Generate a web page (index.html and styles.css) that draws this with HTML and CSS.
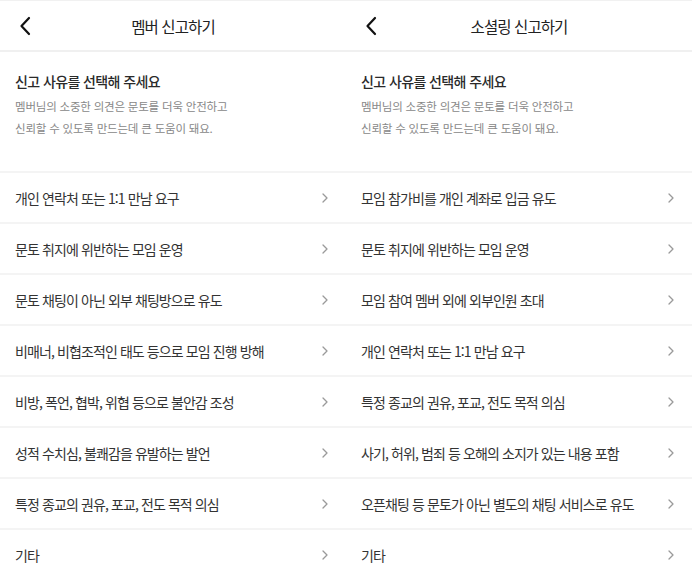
FILE: index.html
```html
<!DOCTYPE html>
<html lang="ko">
<head>
<meta charset="utf-8">
<title>신고하기</title>
<link rel="stylesheet" href="styles.css">
</head>
<body>
<div class="screens">
  <section class="panel">
    <header class="topbar">
      <span class="back"><svg width="12" height="20" viewBox="0 0 12 20"><path d="M10 2 L2.5 10 L10 18" fill="none" stroke="#111" stroke-width="2.2" stroke-linecap="round" stroke-linejoin="round"/></svg></span>
      <h1 class="title">멤버 신고하기</h1>
    </header>
    <div class="intro">
      <h2 class="intro-title">신고 사유를 선택해 주세요</h2>
      <p class="intro-text">멤버님의 소중한 의견은 문토를 더욱 안전하고<br>신뢰할 수 있도록 만드는데 큰 도움이 돼요.</p>
    </div>
    <ul class="reasons">
      <li class="reason"><span>개인 연락처 또는 1:1 만남 요구</span><svg class="chev" width="6" height="10" viewBox="0 0 6 10"><path d="M1 1 L5 5 L1 9" fill="none" stroke="#9a9a9a" stroke-width="1.3" stroke-linecap="round" stroke-linejoin="round"/></svg></li>
      <li class="reason"><span>문토 취지에 위반하는 모임 운영</span><svg class="chev" width="6" height="10" viewBox="0 0 6 10"><path d="M1 1 L5 5 L1 9" fill="none" stroke="#9a9a9a" stroke-width="1.3" stroke-linecap="round" stroke-linejoin="round"/></svg></li>
      <li class="reason"><span>문토 채팅이 아닌 외부 채팅방으로 유도</span><svg class="chev" width="6" height="10" viewBox="0 0 6 10"><path d="M1 1 L5 5 L1 9" fill="none" stroke="#9a9a9a" stroke-width="1.3" stroke-linecap="round" stroke-linejoin="round"/></svg></li>
      <li class="reason"><span>비매너, 비협조적인 태도 등으로 모임 진행 방해</span><svg class="chev" width="6" height="10" viewBox="0 0 6 10"><path d="M1 1 L5 5 L1 9" fill="none" stroke="#9a9a9a" stroke-width="1.3" stroke-linecap="round" stroke-linejoin="round"/></svg></li>
      <li class="reason"><span>비방, 폭언, 협박, 위협 등으로 불안감 조성</span><svg class="chev" width="6" height="10" viewBox="0 0 6 10"><path d="M1 1 L5 5 L1 9" fill="none" stroke="#9a9a9a" stroke-width="1.3" stroke-linecap="round" stroke-linejoin="round"/></svg></li>
      <li class="reason"><span>성적 수치심, 불쾌감을 유발하는 발언</span><svg class="chev" width="6" height="10" viewBox="0 0 6 10"><path d="M1 1 L5 5 L1 9" fill="none" stroke="#9a9a9a" stroke-width="1.3" stroke-linecap="round" stroke-linejoin="round"/></svg></li>
      <li class="reason"><span>특정 종교의 권유, 포교, 전도 목적 의심</span><svg class="chev" width="6" height="10" viewBox="0 0 6 10"><path d="M1 1 L5 5 L1 9" fill="none" stroke="#9a9a9a" stroke-width="1.3" stroke-linecap="round" stroke-linejoin="round"/></svg></li>
      <li class="reason"><span>기타</span><svg class="chev" width="6" height="10" viewBox="0 0 6 10"><path d="M1 1 L5 5 L1 9" fill="none" stroke="#9a9a9a" stroke-width="1.3" stroke-linecap="round" stroke-linejoin="round"/></svg></li>
    </ul>
  </section>
  <section class="panel">
    <header class="topbar">
      <span class="back"><svg width="12" height="20" viewBox="0 0 12 20"><path d="M10 2 L2.5 10 L10 18" fill="none" stroke="#111" stroke-width="2.2" stroke-linecap="round" stroke-linejoin="round"/></svg></span>
      <h1 class="title">소셜링 신고하기</h1>
    </header>
    <div class="intro">
      <h2 class="intro-title">신고 사유를 선택해 주세요</h2>
      <p class="intro-text">멤버님의 소중한 의견은 문토를 더욱 안전하고<br>신뢰할 수 있도록 만드는데 큰 도움이 돼요.</p>
    </div>
    <ul class="reasons">
      <li class="reason"><span>모임 참가비를 개인 계좌로 입금 유도</span><svg class="chev" width="6" height="10" viewBox="0 0 6 10"><path d="M1 1 L5 5 L1 9" fill="none" stroke="#9a9a9a" stroke-width="1.3" stroke-linecap="round" stroke-linejoin="round"/></svg></li>
      <li class="reason"><span>문토 취지에 위반하는 모임 운영</span><svg class="chev" width="6" height="10" viewBox="0 0 6 10"><path d="M1 1 L5 5 L1 9" fill="none" stroke="#9a9a9a" stroke-width="1.3" stroke-linecap="round" stroke-linejoin="round"/></svg></li>
      <li class="reason"><span>모임 참여 멤버 외에 외부인원 초대</span><svg class="chev" width="6" height="10" viewBox="0 0 6 10"><path d="M1 1 L5 5 L1 9" fill="none" stroke="#9a9a9a" stroke-width="1.3" stroke-linecap="round" stroke-linejoin="round"/></svg></li>
      <li class="reason"><span>개인 연락처 또는 1:1 만남 요구</span><svg class="chev" width="6" height="10" viewBox="0 0 6 10"><path d="M1 1 L5 5 L1 9" fill="none" stroke="#9a9a9a" stroke-width="1.3" stroke-linecap="round" stroke-linejoin="round"/></svg></li>
      <li class="reason"><span>특정 종교의 권유, 포교, 전도 목적 의심</span><svg class="chev" width="6" height="10" viewBox="0 0 6 10"><path d="M1 1 L5 5 L1 9" fill="none" stroke="#9a9a9a" stroke-width="1.3" stroke-linecap="round" stroke-linejoin="round"/></svg></li>
      <li class="reason"><span>사기, 허위, 범죄 등 오해의 소지가 있는 내용 포함</span><svg class="chev" width="6" height="10" viewBox="0 0 6 10"><path d="M1 1 L5 5 L1 9" fill="none" stroke="#9a9a9a" stroke-width="1.3" stroke-linecap="round" stroke-linejoin="round"/></svg></li>
      <li class="reason"><span>오픈채팅 등 문토가 아닌 별도의 채팅 서비스로 유도</span><svg class="chev" width="6" height="10" viewBox="0 0 6 10"><path d="M1 1 L5 5 L1 9" fill="none" stroke="#9a9a9a" stroke-width="1.3" stroke-linecap="round" stroke-linejoin="round"/></svg></li>
      <li class="reason"><span>기타</span><svg class="chev" width="6" height="10" viewBox="0 0 6 10"><path d="M1 1 L5 5 L1 9" fill="none" stroke="#9a9a9a" stroke-width="1.3" stroke-linecap="round" stroke-linejoin="round"/></svg></li>
    </ul>
  </section>
</div>
</body>
</html>
```

FILE: styles.css
```css
* { box-sizing: border-box; }
html, body { margin: 0; padding: 0; background: #fff; }
body {
  font-family: "Noto Sans CJK KR", "Noto Sans", sans-serif;
  color: #333;
  overflow: hidden;
}
.screens {
  display: flex;
  width: 692px;
  height: 582px;
}
.panel {
  width: 346px;
  flex: 0 0 346px;
  display: flex;
  flex-direction: column;
}
.topbar {
  position: relative;
  height: 52px;
  border-top: 1px solid #f1f1f1;
  border-bottom: 2px solid #f0f0f0;
  display: flex;
  align-items: center;
  justify-content: center;
}
.back {
  position: absolute;
  left: 19px;
  top: 15px;
  display: flex;
}
.title {
  margin: 0;
  font-size: 15.5px;
  font-weight: 400;
  color: #222;
  letter-spacing: -0.9px;
  line-height: 20px;
}
.intro {
  padding: 19px 15px 32px;
}
.intro-title {
  margin: 0;
  font-size: 14px;
  font-weight: 500;
  color: #2a2a2a;
  line-height: 20px;
  letter-spacing: -0.6px;
}
.intro-text {
  margin: 4px 0 0;
  font-size: 11.5px;
  line-height: 22px;
  color: #888;
  letter-spacing: -0.2px;
}
.reasons {
  list-style: none;
  margin: 0;
  padding: 0;
}
.reason {
  height: 51px;
  border-top: 2px solid #f4f4f4;
  display: flex;
  align-items: center;
  justify-content: space-between;
  padding: 0 18px 0 15px;
  font-size: 14px;
  color: #333;
  letter-spacing: -0.9px;
}
.chev { display: block; }
```
